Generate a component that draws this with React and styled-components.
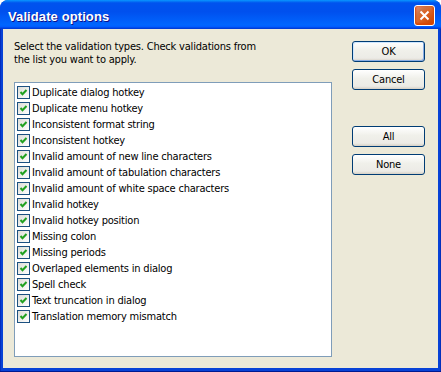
import React from "react";
import styled, { createGlobalStyle } from "styled-components";

const checks = [
  "Duplicate dialog hotkey",
  "Duplicate menu hotkey",
  "Inconsistent format string",
  "Inconsistent hotkey",
  "Invalid amount of new line characters",
  "Invalid amount of tabulation characters",
  "Invalid amount of white space characters",
  "Invalid hotkey",
  "Invalid hotkey position",
  "Missing colon",
  "Missing periods",
  "Overlaped elements in dialog",
  "Spell check",
  "Text truncation in dialog",
  "Translation memory mismatch",
];

const CheckBox = () => (
  <StCheck>
    <svg width="11" height="11" viewBox="0 0 11 11">
      <polyline points="2.5,5 4.5,7.2 8.5,3" fill="none" stroke="#21A121" strokeWidth="2" />
    </svg>
  </StCheck>
);

const App = () => {
  return (
    <>
      <GlobalStyle />
      <StWindow>
        <StTitleBar>
          <h1>Validate options</h1>
          <StClose aria-label="Close">
            <svg width="13" height="13" viewBox="0 0 13 13">
              <path d="M2.5 2.5 L10.5 10.5 M10.5 2.5 L2.5 10.5" stroke="#fff" strokeWidth="2" />
            </svg>
          </StClose>
        </StTitleBar>
        <StFrame>
          <StBody>
            <StMain>
              <StIntro>
                Select the validation types. Check validations from
                <br />
                the list you want to apply.
              </StIntro>
              <StList>
                {checks.map((c) => (
                  <StRow key={c}>
                    <CheckBox />
                    <span>{c}</span>
                  </StRow>
                ))}
              </StList>
            </StMain>
            <StButtons>
              <StButton $default>OK</StButton>
              <StButton>Cancel</StButton>
              <StButton $gap>All</StButton>
              <StButton>None</StButton>
            </StButtons>
          </StBody>
        </StFrame>
      </StWindow>
    </>
  );
};

export default App;

const GlobalStyle = createGlobalStyle`
  html, body {
    margin: 0;
    padding: 0;
    background: #fff;
  }
  body {
    font-family: "DejaVu Sans Condensed", "DejaVu Sans", sans-serif;
    font-size: 11px;
    letter-spacing: -0.2px;
    color: #000;
  }
`;

const StWindow = styled.div`
  width: 441px;
  height: 372px;
  display: flex;
  flex-direction: column;
  border-radius: 8px 8px 0 0;
  overflow: hidden;
  background: #0842d6;
`;

const StTitleBar = styled.div`
  height: 29px;
  flex-shrink: 0;
  display: flex;
  align-items: center;
  justify-content: space-between;
  padding: 0 6px 0 8px;
  box-sizing: border-box;
  background: linear-gradient(
    180deg,
    #0997ff 0%,
    #0053ee 10%,
    #0050ee 40%,
    #0066ff 86%,
    #005bff 93%,
    #003dd7 97%,
    #003dd7 100%
  );

  h1 {
    margin: 3px 0 0;
    font-family: "Liberation Sans", Arial, sans-serif;
    font-size: 13px;
    font-weight: 700;
    color: #fff;
    text-shadow: 1px 1px #0f1089;
    letter-spacing: 0.1px;
  }
`;

const StClose = styled.button`
  width: 21px;
  height: 21px;
  margin-top: 2px;
  padding: 0;
  display: flex;
  align-items: center;
  justify-content: center;
  border: 1px solid #fff;
  border-radius: 3px;
  background: radial-gradient(circle at 90% 90%, #cc4600 0%, #dc6527 55%, #cd7546 70%, #e5876a 90%);
  box-shadow: inset 0 -1px 2px 1px #da4600;
`;

const StFrame = styled.div`
  flex: 1;
  display: flex;
  padding: 0 3px 4px 3px;
  background: linear-gradient(90deg, #0019a6 0, #0842d6 1px, #0842d6 calc(100% - 1px), #001ea0 100%);
  box-shadow: inset 0 -1px #001a90;
`;

const StBody = styled.div`
  flex: 1;
  display: flex;
  padding: 11px 13px 11px 11px;
  background: #ece9d8;
`;

const StMain = styled.div`
  display: flex;
  flex-direction: column;
  width: 318px;
`;

const StIntro = styled.p`
  margin: 0 0 16px;
  line-height: 13px;
`;

const StList = styled.div`
  height: 275px;
  box-sizing: border-box;
  border: 1px solid #7f9db9;
  background: #fff;
  padding-top: 1px;
`;

const StRow = styled.div`
  height: 16px;
  display: flex;
  align-items: center;
  gap: 2px;
  padding-left: 2px;
  white-space: nowrap;
`;

const StCheck = styled.span`
  width: 13px;
  height: 13px;
  box-sizing: border-box;
  display: flex;
  align-items: center;
  justify-content: center;
  border: 1px solid #1c5180;
  background: linear-gradient(135deg, #dcdcd7 0%, #ffffff 100%);
  flex-shrink: 0;
`;

const StButtons = styled.div`
  display: flex;
  flex-direction: column;
  gap: 7px;
  margin-left: 20px;
  padding-top: 1px;
`;

const StButton = styled.button`
  width: 73px;
  height: 21px;
  padding: 0;
  margin-top: ${({ $gap }) => ($gap ? "29px" : "0")};
  font-family: inherit;
  font-size: 11px;
  letter-spacing: inherit;
  color: #000;
  border: 1px solid #003c74;
  border-radius: 3px;
  background: linear-gradient(180deg, #ffffff 0%, #f0f0ea 45%, #ecebe6 85%, #d6d0c5 100%);
  box-shadow: ${({ $default }) =>
    $default ? "inset -1px -1px #89ade4, inset 1px 1px #cee7ff" : "none"};
`;
